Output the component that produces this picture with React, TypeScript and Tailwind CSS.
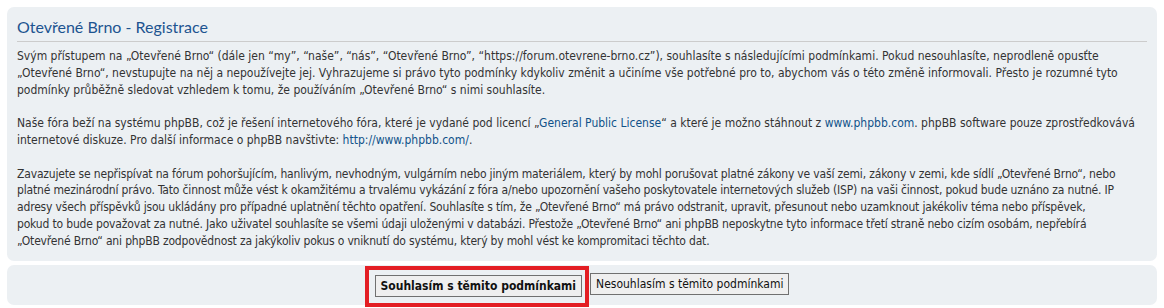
const body = "font-['DejaVu_Sans_Condensed','DejaVu_Sans',sans-serif]";

function Link({ children }: { children: React.ReactNode }) {
  return <a href="#" className="text-[#105289] no-underline">{children}</a>;
}

export default function App() {
  return (
    <div className="bg-white px-[7px] pt-[7px] h-[308px] flex flex-col gap-[4px]">
      <div className={`${body} bg-[#ECF0F3] rounded-[7px] px-[10px] pt-[10px] pb-[11px] text-[12px] leading-[1.4] text-[#333333]`}>
        <h2 className="font-['Lato',sans-serif] text-[16px] leading-[20px] text-[#1D5490] pb-[4px] border-b border-[#CCCCCC]">
          Otevřené Brno - Registrace
        </h2>
        <div className="mt-[6px] flex flex-col gap-[16.8px] whitespace-nowrap">
          <p>
            Svým přístupem na „Otevřené Brno“ (dále jen “my”, “naše”, “nás”, “Otevřené Brno”, “https://forum.otevrene-brno.cz”), souhlasíte s následujícími podmínkami. Pokud nesouhlasíte, neprodleně opusťte<br />
            „Otevřené Brno“, nevstupujte na něj a nepoužívejte jej. Vyhrazujeme si právo tyto podmínky kdykoliv změnit a učiníme vše potřebné pro to, abychom vás o této změně informovali. Přesto je rozumné tyto<br />
            podmínky průběžně sledovat vzhledem k tomu, že používáním „Otevřené Brno“ s nimi souhlasíte.
          </p>
          <p>
            Naše fóra beží na systému phpBB, což je řešení internetového fóra, které je vydané pod licencí „<Link>General Public License</Link>“ a které je možno stáhnout z <Link>www.phpbb.com</Link>. phpBB software pouze zprostředkovává<br />
            internetové diskuze. Pro další informace o phpBB navštivte: <Link>http://www.phpbb.com/</Link>.
          </p>
          <p className="tracking-[-0.17px]">
            Zavazujete se nepřispívat na fórum pohoršujícím, hanlivým, nevhodným, vulgárním nebo jiným materiálem, který by mohl porušovat platné zákony ve vaší zemi, zákony v zemi, kde sídlí „Otevřené Brno“, nebo<br />
            platné mezinárodní právo. Tato činnost může vést k okamžitému a trvalému vykázání z fóra a/nebo upozornění vašeho poskytovatele internetových služeb (ISP) na vaši činnost, pokud bude uznáno za nutné. IP<br />
            adresy všech příspěvků jsou ukládány pro případné uplatnění těchto opatření. Souhlasíte s tím, že „Otevřené Brno“ má právo odstranit, upravit, přesunout nebo uzamknout jakékoliv téma nebo příspěvek,<br />
            pokud to bude považovat za nutné. Jako uživatel souhlasíte se všemi údaji uloženými v databázi. Přestože „Otevřené Brno“ ani phpBB neposkytne tyto informace třetí straně nebo cizím osobám, nepřebírá<br />
            „Otevřené Brno“ ani phpBB zodpovědnost za jakýkoliv pokus o vniknutí do systému, který by mohl vést ke kompromitaci těchto dat.
          </p>
        </div>
      </div>
      <div className={`${body} bg-[#ECF0F3] rounded-[7px] h-[40px] flex items-start justify-center gap-[8px] pt-[8px]`}>
        <div className="relative">
          <button className="bg-[#EFEFEF] border border-[#707070] px-[5px] h-[22px] text-[12px] font-bold text-[#111]">
            Souhlasím s těmito podmínkami
          </button>
          <span className="absolute left-[-10px] top-[-7px] right-[-7px] bottom-[-10px] border-[4px] border-[#E31E24] pointer-events-none" />
        </div>
        <button className="bg-[#EFEFEF] border border-[#707070] px-[5px] h-[22px] text-[12px] text-[#111]">
          Nesouhlasím s těmito podmínkami
        </button>
      </div>
    </div>
  );
}
